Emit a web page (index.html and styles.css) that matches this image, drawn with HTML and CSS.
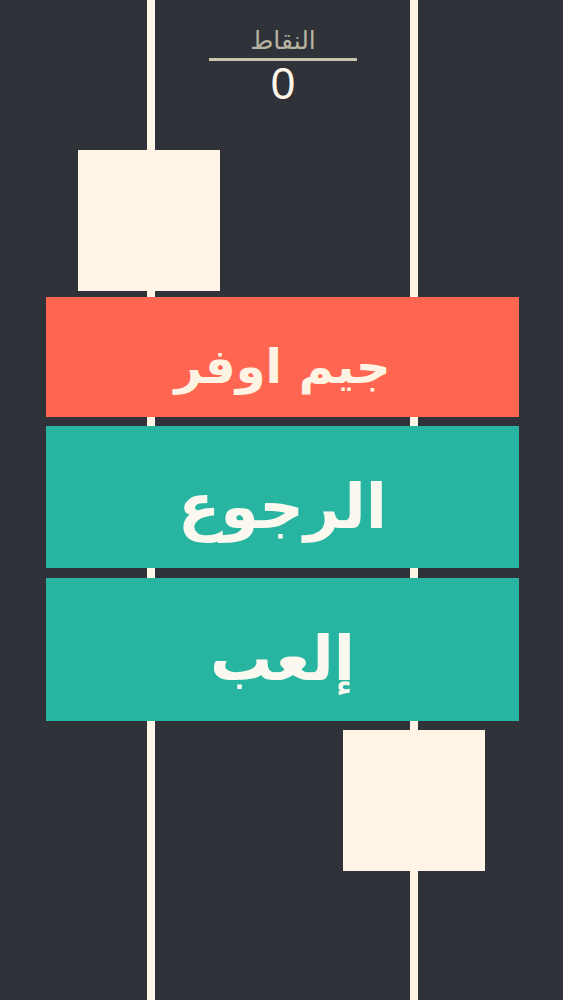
FILE: index.html
```html
<!DOCTYPE html>
<html lang="ar" dir="rtl">
<head>
<meta charset="utf-8">
<link rel="stylesheet" href="styles.css">
</head>
<body>
<div class="game">
  <div class="lane lane-left"></div>
  <div class="lane lane-right"></div>
  <div class="tile tile-top"></div>
  <div class="tile tile-bottom"></div>
  <div class="score">
    <div class="score-label">النقاط</div>
    <div class="score-value">0</div>
  </div>
  <div class="menu">
    <div class="btn btn-over">جيم اوفر</div>
    <div class="btn btn-teal btn-back">الرجوع</div>
    <div class="btn btn-teal btn-play">إلعب</div>
  </div>
</div>
</body>
</html>
```
FILE: styles.css
```css
html, body {
  margin: 0;
  padding: 0;
  background: #2f3238;
}
.game {
  position: relative;
  width: 563px;
  height: 1000px;
  overflow: hidden;
  background: #2f3238;
  font-family: "DejaVu Sans", sans-serif;
}
.lane {
  position: absolute;
  top: 0;
  bottom: 0;
  width: 8px;
  background: #fff5e6;
}
.lane-left { left: 147px; }
.lane-right { left: 410px; }
.tile {
  position: absolute;
  width: 142px;
  height: 141px;
  background: #fff4e5;
}
.tile-top { left: 78px; top: 150px; }
.tile-bottom { left: 343px; top: 730px; }
.score {
  position: absolute;
  left: 209px;
  top: 25px;
  width: 148px;
  display: flex;
  flex-direction: column;
  align-items: center;
}
.score-label {
  width: 100%;
  text-align: center;
  color: #b7b5a0;
  font-size: 25px;
  line-height: 32px;
  border-bottom: 3px solid #c9c5ab;
  padding-bottom: 1px;
}
.score-value {
  color: #fff5e6;
  font-family: "Liberation Sans", sans-serif;
  font-size: 44px;
  line-height: 46px;
}
.menu {
  position: absolute;
  left: 46px;
  top: 297px;
  width: 473px;
  display: flex;
  flex-direction: column;
}
.btn {
  display: flex;
  align-items: center;
  justify-content: center;
  color: #fff4e3;
  font-weight: bold;
  box-sizing: border-box;
}
.btn-over {
  height: 120px;
  background: #fe6651;
  font-size: 48px;
  padding-top: 18px;
}
.btn-teal {
  height: 142px;
  background: #27b5a1;
  color: #fbf8ef;
  font-size: 62px;
  padding-top: 18px;
}
.btn-back { margin-top: 9px; }
.btn-play { margin-top: 10px; height: 143px; }
```
